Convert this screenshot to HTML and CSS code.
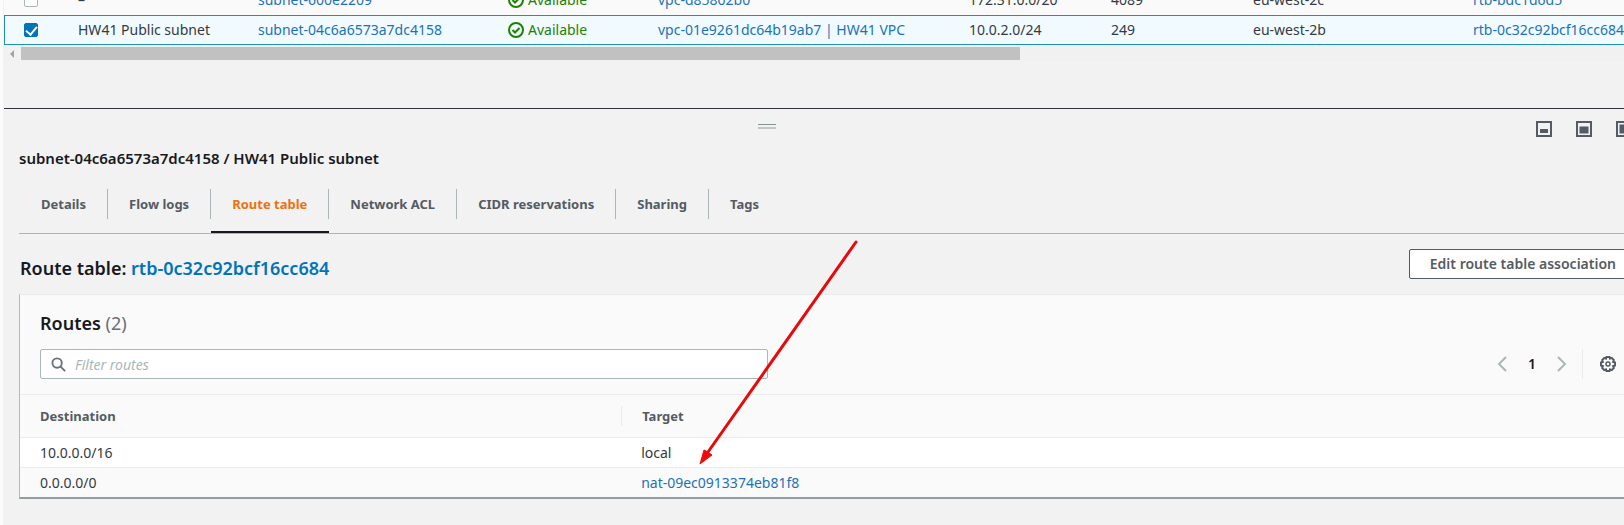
FILE: index.html
```html
<!DOCTYPE html>
<html lang="en">
<head>
<meta charset="utf-8">
<title>Subnets</title>
<link rel="stylesheet" href="styles.css">
</head>
<body>
<main class="page">
  <section class="subnets">
    <table class="subnet-table">
      <colgroup>
        <col class="col-check"><col class="col-name"><col class="col-id"><col class="col-state"><col class="col-vpc"><col class="col-cidr"><col class="col-ips"><col class="col-zone"><col class="col-rtb">
      </colgroup>
      <tbody>
        <tr>
          <td><input class="check" type="checkbox" aria-label="Select subnet-600e2209"></td>
          <td>–</td>
          <td><a href="#">subnet-600e2209</a></td>
          <td><span class="status"><svg class="status-icon" viewBox="0 0 16 16"><circle cx="8" cy="8" r="7"/><path d="M4.500 8 7 10.500 11.500 6"/></svg>Available</span></td>
          <td><a href="#">vpc-d85802b0</a></td>
          <td>172.31.0.0/20</td>
          <td>4089</td>
          <td>eu-west-2c</td>
          <td><a href="#">rtb-bdc1d6d5</a></td>
        </tr>
        <tr class="selected">
          <td><input class="check" type="checkbox" checked aria-label="Select subnet-04c6a6573a7dc4158"></td>
          <td>HW41 Public subnet</td>
          <td><a href="#">subnet-04c6a6573a7dc4158</a></td>
          <td><span class="status"><svg class="status-icon" viewBox="0 0 16 16"><circle cx="8" cy="8" r="7"/><path d="M4.500 8 7 10.500 11.500 6"/></svg>Available</span></td>
          <td><a href="#">vpc-01e9261dc64b19ab7 | HW41 VPC</a></td>
          <td>10.0.2.0/24</td>
          <td>249</td>
          <td>eu-west-2b</td>
          <td><a href="#">rtb-0c32c92bcf16cc684</a></td>
        </tr>
      </tbody>
    </table>
    <div class="scrollbar">
      <svg class="scroll-arrow" viewBox="0 0 4 8"><path d="M4 0v8L0 4z"/></svg>
      <div class="scroll-thumb"></div>
    </div>
  </section>

  <section class="panel">
    <div class="panel-bar">
      <div class="handle"></div>
      <div class="layout-buttons">
        <button class="icon-button" aria-label="Small panel"><svg viewBox="0 0 16 16"><rect class="frame" x="1" y="1" width="14" height="14"/><rect class="fill" x="4" y="8" width="8" height="4"/></svg></button>
        <button class="icon-button" aria-label="Half panel"><svg viewBox="0 0 16 16"><rect class="frame" x="1" y="1" width="14" height="14"/><rect class="fill" x="3.500" y="5.500" width="9" height="7"/></svg></button>
        <button class="icon-button" aria-label="Full panel"><svg viewBox="0 0 16 16"><rect class="frame" x="1" y="1" width="14" height="14"/><rect class="fill" x="3.500" y="3.500" width="9" height="9"/></svg></button>
      </div>
    </div>
    <h1 class="panel-title">subnet-04c6a6573a7dc4158 / HW41 Public subnet</h1>
    <nav class="tabs">
      <a class="tab" href="#">Details</a>
      <a class="tab" href="#">Flow logs</a>
      <a class="tab active" href="#">Route table</a>
      <a class="tab" href="#">Network ACL</a>
      <a class="tab" href="#">CIDR reservations</a>
      <a class="tab" href="#">Sharing</a>
      <a class="tab" href="#">Tags</a>
    </nav>
    <div class="route-header">
      <h2 class="heading">Route table: <a href="#">rtb-0c32c92bcf16cc684</a></h2>
      <button class="edit-button">Edit route table association</button>
    </div>
    <div class="card">
      <h2 class="heading card-title">Routes <span class="count">(2)</span></h2>
      <div class="toolbar">
        <div class="filter">
          <svg class="search-icon" viewBox="0 0 16 16"><circle cx="6.500" cy="6.500" r="5"/><path d="m10 10 5 5"/></svg>
          <input class="filter-input" type="text" placeholder="Filter routes" aria-label="Filter routes">
        </div>
        <div class="pager">
          <button class="icon-button" aria-label="Previous page"><svg viewBox="0 0 16 16"><path class="chevron" d="m12 1-7 7 7 7"/></svg></button>
          <span class="page-number">1</span>
          <button class="icon-button" aria-label="Next page"><svg viewBox="0 0 16 16"><path class="chevron" d="m4 1 7 7-7 7"/></svg></button>
          <div class="settings">
            <button class="icon-button" aria-label="Preferences"><svg viewBox="0 0 16 16"><path class="gear" d="M6.500 1h3l.5 1.600 1.700-.7 2.100 2.100-.7 1.800 1.900.7v3l-1.900.7.7 1.800-2.100 2.100-1.700-.7-.5 1.600h-3L6 13.400l-1.700.7L2.200 12l.7-1.800L1 9.500v-3l1.900-.7L2.200 4l2.100-2.100 1.700.7z"/><circle class="gear hub" cx="8" cy="8" r="2"/></svg></button>
          </div>
        </div>
      </div>
      <table class="routes">
        <colgroup><col class="col-destination"><col></colgroup>
        <thead><tr><th><span class="th-text">Destination</span></th><th><span class="th-text">Target</span></th></tr></thead>
        <tbody>
          <tr><td>10.0.0.0/16</td><td>local</td></tr>
          <tr><td>0.0.0.0/0</td><td><a href="#">nat-09ec0913374eb81f8</a></td></tr>
        </tbody>
      </table>
    </div>
  </section>

  <svg class="pointer" viewBox="0 0 160 226"><path class="pointer-line" d="M156 3 8 213"/><path class="pointer-head" d="M0 225 4 211 8 213 12 216z"/></svg>
</main>
</body>
</html>
```
FILE: styles.css
```css
* { box-sizing: border-box; }

html { overflow: hidden; background: #f2f2f2; }

body {
  margin: 0;
  overflow: hidden;
  min-height: 100vh;
  border-left: 3px solid #fbfbfb;
  background: #f2f2f2;
  color: #333a42;
  font: 14px/20px "Noto Sans", "Open Sans", sans-serif;
}

a { color: #1a73b5; text-decoration: none; }

h1, h2 { margin: 0; color: #16191f; font-weight: 600; }

button, input { font: inherit; }

table { border-collapse: separate; border-spacing: 0; table-layout: fixed; }

td, th { padding: 0; text-align: left; white-space: nowrap; }

/* The content area is wider than the window and runs past its right edge. */
.page { display: flow-root; position: relative; margin-right: -32px; }

/* The list is scrolled so that its upper row is half out of view. */
.subnets { margin: -15px 0 0 1px; }

.subnet-table { width: 100%; }

.subnet-table td { height: 30px; background: #fafafa; }

.subnet-table .selected td {
  border-top: 1px solid #1f93ad;
  border-bottom: 1px solid #1f93ad;
  background: #f1faff;
}

.subnet-table .selected td:first-child { border-left: 1px solid #1f93ad; }

.subnet-table td:first-child { padding-left: 20px; }

.subnet-table .selected td:first-child { padding-left: 19px; }

.col-check { width: 74px; }
.col-name { width: 180px; }
.col-id { width: 250px; }
.col-state { width: 150px; }
.col-vpc { width: 311px; }
.col-cidr { width: 142px; }
.col-ips { width: 142px; }
.col-zone { width: 220px; }

.check {
  display: block;
  width: 14px;
  height: 14px;
  margin: 0;
  appearance: none;
  border: 1px solid #aab7b8;
  border-radius: 2px;
  background: #fff;
}

.check:checked { border-color: #0073bb; background: #0073bb; }

.check:checked::before {
  content: "";
  display: block;
  width: 5px;
  height: 9px;
  margin: 0 auto;
  border: solid #fff;
  border-width: 0 2px 2px 0;
  transform: rotate(40deg);
}

.status { display: flex; align-items: center; gap: 4px; color: #1d8102; }

.status-icon { width: 16px; height: 16px; fill: none; stroke: currentColor; stroke-width: 2; }

.scrollbar {
  display: flex;
  align-items: center;
  height: 17px;
  padding-left: 6px;
  gap: 7px;
  background: #f1f1f1;
}

.scroll-arrow { width: 4px; height: 8px; fill: #a3a3a3; }

.scroll-thumb { width: 60.7%; height: 13px; background: #c1c1c1; }

.panel {
  margin: 46px 0 0 1px;
  padding: 0 19px 27px 15px;
  border-top: 1px solid #30343a;
}

.panel-bar { display: grid; grid-template-columns: 1fr auto 1fr; padding: 12px 0 0; }

.handle {
  grid-column: 2;
  width: 18px;
  height: 5px;
  margin: 3px 122px 0 0;
  border-top: 1px solid #879596;
  border-bottom: 2px solid #c2c6c6;
}

.layout-buttons { grid-column: 3; display: flex; justify-content: flex-end; gap: 24px; padding-right: 5px; }

.icon-button {
  display: block;
  width: 16px;
  height: 16px;
  padding: 0;
  border: 0;
  background: none;
}

.icon-button svg { display: block; width: 16px; height: 16px; fill: none; }

.frame { stroke: #545b64; stroke-width: 2; }
.fill { fill: #545b64; }
.chevron { stroke: #aab7b8; stroke-width: 2; }
.gear { stroke: #545b64; stroke-width: 2; }
.hub { stroke-width: 1.5; }

.panel-title { margin-top: 11px; font-size: 15px; line-height: 20px; }

.tabs { display: flex; padding: 21px 0 0 1px; border-bottom: 1px solid #aab7b8; }

.tab {
  display: flex;
  height: 44px;
  padding: 5px 0 0;
  border-bottom: 2px solid transparent;
  color: #545b64;
  font-size: 13px;
  font-weight: 700;
}

.tab::before { content: ""; width: 21px; }

.tab::after {
  content: "";
  width: 21px;
  height: 30px;
  margin-top: -5px;
  border-right: 1px solid #aab7b8;
}

.tab:last-child::after { border: 0; }

.tab.active { border-color: #16191f; color: #ec7211; }

.route-header {
  display: flex;
  align-items: flex-start;
  justify-content: space-between;
  padding: 15px 0;
}

.heading { font-size: 18px; line-height: 22px; }

.route-header .heading { padding: 8px 0 0 1px; }

.route-header a { color: #0073bb; }

.edit-button {
  height: 30px;
  padding: 0 20px;
  border: 1px solid #545b64;
  border-radius: 2px;
  background: #fff;
  color: #545b64;
  font-weight: 600;
}

.card {
  border: 1px solid #eaeded;
  border-left-color: #b5bbbd;
  border-bottom: 2px solid #959da0;
  background: #fafafa;
}

.card-title { padding: 17px 20px 0; }

.count { color: #687078; font-weight: 400; }

.toolbar {
  display: flex;
  align-items: center;
  justify-content: space-between;
  padding: 15px 20px;
}

.filter {
  display: flex;
  align-items: center;
  gap: 9px;
  width: 46.2%;
  height: 30px;
  padding: 0 10px;
  border: 1px solid #aab7b8;
  border-radius: 2px;
  background: #fff;
}

.search-icon { flex: none; width: 15px; height: 15px; fill: none; stroke: #687078; stroke-width: 2; }

.filter-input { flex: 1; min-width: 0; height: 26px; padding: 0; border: 0; outline: 0; background: none; }

.filter-input::placeholder { color: #aab7b8; font-style: italic; opacity: 1; }

.pager { display: flex; align-items: center; gap: 18px; }

.page-number { color: #16191f; font-weight: 600; }

.settings { display: flex; align-items: center; height: 30px; margin-left: -6px; padding-left: 17px; border-left: 1px solid #eaeded; }

.routes { width: 100%; }

.col-destination { width: 37.2%; }

.routes th, .routes td { padding-left: 20px; border-top: 1px solid #eaeded; }

.routes th { height: 43px; color: #545b64; font-size: 13px; font-weight: 700; }

.th-text { display: block; }

.routes th + th { padding-left: 0; }

.routes th + th .th-text { padding-left: 20px; border-left: 1px solid #eaeded; }

.routes td { height: 30px; background: #fff; }

.routes tbody tr:last-child td { background: #fafafa; }

/* Annotation arrow drawn over the panel. */
.pointer { position: absolute; left: 697px; top: 239px; width: 160px; height: 226px; overflow: visible; pointer-events: none; }

.pointer-line { fill: none; stroke: #e8090b; stroke-width: 3; stroke-linecap: round; }

.pointer-head { fill: #f00a0a; stroke: #f00a0a; }
```
